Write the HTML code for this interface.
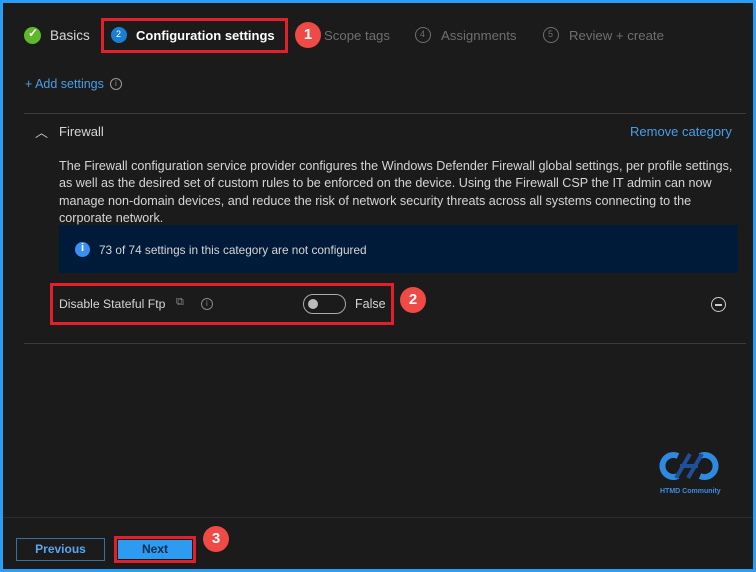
<!DOCTYPE html>
<html><head><style>
*{margin:0;padding:0;box-sizing:border-box}
body{width:756px;height:572px;background:#2a9df4;font-family:"Liberation Sans",sans-serif;overflow:hidden;position:relative}
.main{position:absolute;left:3px;top:3px;width:750px;height:566px;background:#1b1b1b}
.a{position:absolute;white-space:nowrap}
.t{color:#d6d6d6;font-size:13.5px}
.g{color:#6f6f6f;font-size:13.2px}
.circ{position:absolute;border-radius:50%}
.red{position:absolute;border:3px solid #e3202a}
.badge{position:absolute;width:26px;height:26px;border-radius:50%;background:#ef4a45;color:#fff;font-size:15px;text-align:center;line-height:26px;font-weight:bold}
</style></head><body>
<div class="main"></div>
<div class="circ" style="left:24px;top:27px;width:17px;height:17px;background:#5fb72b"></div>
<div class="a" style="left:28px;top:26px;color:#fff;font-size:12px;font-weight:bold">✓</div>
<div class="a t" style="left:50px;top:28px">Basics</div>
<div class="red" style="left:101px;top:18px;width:187px;height:35px"></div>
<div class="circ" style="left:111px;top:27px;width:16px;height:16px;background:#1a7fd4"></div>
<div class="a" style="left:116px;top:29px;color:#fff;font-size:9px">2</div>
<div class="a" style="left:136px;top:28px;color:#fff;font-size:13px;font-weight:bold">Configuration settings</div>
<div class="badge" style="left:295px;top:22px">1</div>
<div class="a g" style="left:324px;top:28px">Scope tags</div>
<div class="circ" style="left:415px;top:27px;width:16px;height:16px;border:1px solid #6f6f6f"></div>
<div class="a" style="left:420px;top:29px;color:#6f6f6f;font-size:9px">4</div>
<div class="a g" style="left:441px;top:28px">Assignments</div>
<div class="circ" style="left:543px;top:27px;width:16px;height:16px;border:1px solid #6f6f6f"></div>
<div class="a" style="left:548px;top:29px;color:#6f6f6f;font-size:9px">5</div>
<div class="a g" style="left:569px;top:28px">Review + create</div>
<div class="a" style="left:25px;top:77px;color:#4a9ee8;font-size:12.5px">+ Add settings</div>
<div class="circ" style="left:110px;top:78px;width:12px;height:12px;border:1px solid #999"></div>
<div class="a" style="left:115px;top:79px;color:#999;font-size:8px">i</div>
<div class="a" style="left:24px;top:113px;width:722px;height:1px;background:#3c3c3c"></div>
<div class="a" style="left:35px;top:122px;color:#ccc;font-size:13px">︿</div>
<div class="a t" style="left:59px;top:124px;font-size:13px">Firewall</div>
<div class="a" style="left:630px;top:124px;color:#4a9ee8;font-size:13px">Remove category</div>
<div class="a" style="left:59px;top:158px;color:#d6d6d6;font-size:12.6px;line-height:17.3px">The Firewall configuration service provider configures the Windows Defender Firewall global settings, per profile settings,<br>as well as the desired set of custom rules to be enforced on the device. Using the Firewall CSP the IT admin can now<br>manage non-domain devices, and reduce the risk of network security threats across all systems connecting to the<br>corporate network.</div>
<div class="a" style="left:59px;top:225px;width:679px;height:48px;background:#001a3a"></div>
<div class="circ" style="left:75px;top:242px;width:15px;height:15px;background:#3b8ff0"></div>
<div class="a" style="left:81px;top:242px;color:#fff;font-size:11px;font-weight:bold">i</div>
<div class="a" style="left:99px;top:243px;color:#d6d6d6;font-size:11.8px">73 of 74 settings in this category are not configured</div>
<div class="red" style="left:50px;top:283px;width:344px;height:42px"></div>
<div class="a" style="left:59px;top:297px;color:#d6d6d6;font-size:12.2px">Disable Stateful Ftp</div>
<div class="a" style="left:176px;top:296px;color:#888;font-size:11px">⧉</div>
<div class="circ" style="left:201px;top:298px;width:12px;height:12px;border:1px solid #888"></div>
<div class="a" style="left:206px;top:299px;color:#888;font-size:8px">i</div>
<div class="a" style="left:303px;top:294px;width:43px;height:20px;border:1.5px solid #aaa;border-radius:10px"></div>
<div class="circ" style="left:308px;top:299px;width:10px;height:10px;background:#bbb"></div>
<div class="a" style="left:355px;top:297px;color:#d6d6d6;font-size:12.5px">False</div>
<div class="badge" style="left:400px;top:287px">2</div>
<div class="circ" style="left:711px;top:297px;width:15px;height:15px;border:1.5px solid #ccc"></div>
<div class="a" style="left:715px;top:304px;width:7px;height:1.5px;background:#ccc"></div>
<div class="a" style="left:24px;top:343px;width:722px;height:1px;background:#3c3c3c"></div>
<svg class="a" style="left:656px;top:448px" width="66" height="36" viewBox="0 0 66 36"><path d="M22 8 A11 11 0 1 0 22 28" stroke="#2e8ae0" stroke-width="6" fill="none"/><path d="M44 8 A11 11 0 1 1 44 28" stroke="#2e8ae0" stroke-width="6" fill="none"/><path d="M20 30 L34 6 M32 30 L46 6 M24 18 H42" stroke="#1f4f9a" stroke-width="4" fill="none"/></svg>
<div class="a" style="left:660px;top:488px;color:#3a8ee0;font-size:7px;font-weight:bold">HTMD Community</div>
<div class="a" style="left:3px;top:517px;width:750px;height:1px;background:#2c2c2c"></div>
<div class="a" style="left:16px;top:538px;width:89px;height:23px;border:1px solid #3a6fa0;color:#5aa6ef;font-size:12px;font-weight:bold;text-align:center;line-height:21px">Previous</div>
<div class="red" style="left:114px;top:536px;width:82px;height:27px"></div>
<div class="a" style="left:118px;top:540px;width:74px;height:19px;background:#2d9bf0;color:#0b2a4a;font-size:12px;font-weight:bold;text-align:center;line-height:19px">Next</div>
<div class="badge" style="left:203px;top:526px">3</div>
</body></html>
